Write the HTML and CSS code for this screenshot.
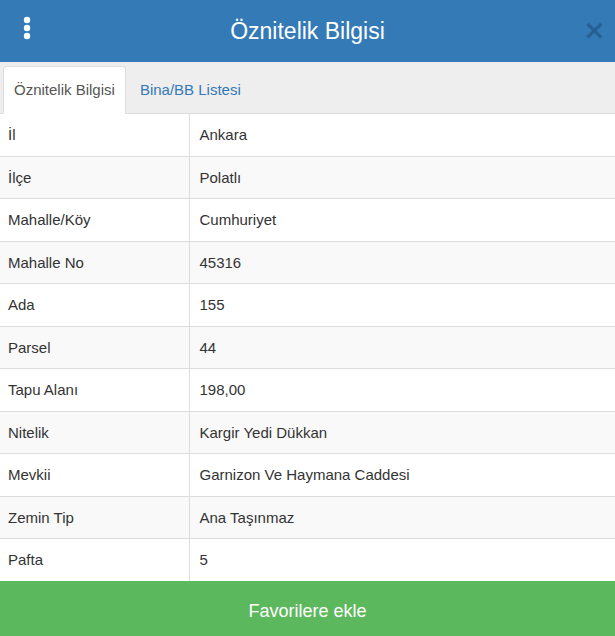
FILE: index.html
```html
<!DOCTYPE html>
<html lang="tr">
<head>
    <meta charset="UTF-8">
    <meta name="viewport" content="width=device-width, initial-scale=1.0">
    <title>Öznitelik Bilgisi</title>
    <link rel="stylesheet" href="styles.css">
</head>
<body>
    <div class="panel">
        <div class="panel-header">
            <button class="menu-btn" aria-label="Menü">
                <svg width="10" height="24" viewBox="0 0 10 24">
                    <circle cx="5" cy="4" r="3.2" fill="#fff"/>
                    <circle cx="5" cy="12" r="3.2" fill="#fff"/>
                    <circle cx="5" cy="20" r="3.2" fill="#fff"/>
                </svg>
            </button>
            <h1>Öznitelik Bilgisi</h1>
            <button class="close-btn" aria-label="Kapat">&times;</button>
        </div>

        <ul class="tabs">
            <li class="active"><a href="#">Öznitelik Bilgisi</a></li>
            <li><a href="#">Bina/BB Listesi</a></li>
        </ul>

        <table class="attr-table">
            <tr><td>İl</td><td>Ankara</td></tr>
            <tr><td>İlçe</td><td>Polatlı</td></tr>
            <tr><td>Mahalle/Köy</td><td>Cumhuriyet</td></tr>
            <tr><td>Mahalle No</td><td>45316</td></tr>
            <tr><td>Ada</td><td>155</td></tr>
            <tr><td>Parsel</td><td>44</td></tr>
            <tr><td>Tapu Alanı</td><td>198,00</td></tr>
            <tr><td>Nitelik</td><td>Kargir Yedi Dükkan</td></tr>
            <tr><td>Mevkii</td><td>Garnizon Ve Haymana Caddesi</td></tr>
            <tr><td>Zemin Tip</td><td>Ana Taşınmaz</td></tr>
            <tr><td>Pafta</td><td>5</td></tr>
        </table>

        <button class="fav-btn">Favorilere ekle</button>
    </div>
</body>
</html>
```

FILE: styles.css
```css
* {
    box-sizing: border-box;
}
body {
    margin: 0;
    font-family: "Liberation Sans", Arial, sans-serif;
    font-size: 15px;
    color: #333;
    background: #fff;
}
.panel {
    width: 615px;
    height: 636px;
    display: flex;
    flex-direction: column;
    overflow: hidden;
}
.panel-header {
    height: 62px;
    flex-shrink: 0;
    background-color: #337ab7;
    display: flex;
    align-items: center;
    justify-content: space-between;
    padding: 0 12px 0 22px;
}
.panel-header h1 {
    margin: 0;
    font-size: 23px;
    font-weight: normal;
    color: #fff;
}
.menu-btn,
.close-btn {
    background: none;
    border: none;
    padding: 0;
    cursor: pointer;
}
.menu-btn {
    width: 10px;
    height: 24px;
    margin-top: -6px;
}
.menu-btn svg {
    display: block;
}
.close-btn {
    font-family: "DejaVu Sans", sans-serif;
    font-size: 27px;
    font-weight: bold;
    line-height: 1;
    color: #1d4f7c;
    opacity: 0.6;
    width: 20px;
    margin-top: -3px;
}
.tabs {
    list-style: none;
    margin: 0;
    padding: 4px 0 0 3px;
    display: flex;
    background-color: #eee;
    border-bottom: 1px solid #ddd;
    flex-shrink: 0;
}
.tabs li {
    margin-bottom: -1px;
}
.tabs a {
    display: block;
    padding: 14px 10px;
    line-height: 18px;
    font-size: 15px;
    color: #337ab7;
    text-decoration: none;
    border: 1px solid transparent;
    border-radius: 4px 4px 0 0;
    margin-right: 3px;
}
.tabs li.active a {
    background-color: #fff;
    color: #555;
    border-color: #ddd;
    border-bottom-color: #fff;
}
.attr-table {
    width: 100%;
    border-collapse: collapse;
    flex-shrink: 0;
}
.attr-table td {
    padding: 10px 10px 10px 8px;
    line-height: 21.5px;
    border-top: 1px solid #ddd;
    font-size: 15px;
}
.attr-table tr:first-child td {
    border-top: none;
}
.attr-table td:first-child {
    width: 189px;
    border-right: 1px solid #ddd;
}
.attr-table td:last-child {
    padding-left: 10px;
}
.attr-table tr:nth-child(even) {
    background-color: #f9f9f9;
}
.fav-btn {
    flex: 1;
    width: 100%;
    border: none;
    background-color: #5cb85c;
    color: #fff;
    font-family: "Liberation Sans", Arial, sans-serif;
    font-size: 18px;
    cursor: pointer;
    padding: 6px 0 0 0;
}
```
